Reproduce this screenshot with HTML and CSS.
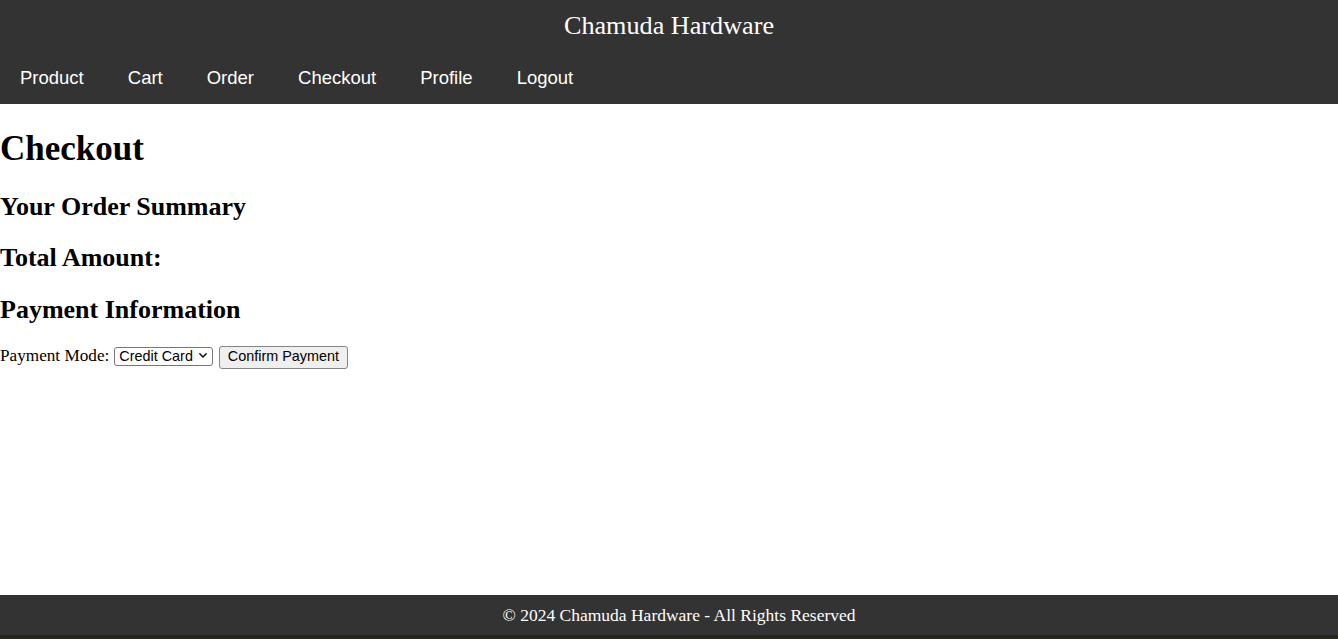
FILE: index.html
```html
<!DOCTYPE html>
<html lang="en">
<head>
<meta charset="utf-8">
<title>Checkout - Chamuda Hardware</title>
<link rel="stylesheet" href="styles.css">
</head>
<body>
<header class="site-header">
  <div class="site-title">Chamuda Hardware</div>
  <nav class="site-nav">
    <a href="#" class="nav-link">Product</a>
    <a href="#" class="nav-link">Cart</a>
    <a href="#" class="nav-link">Order</a>
    <a href="#" class="nav-link">Checkout</a>
    <a href="#" class="nav-link">Profile</a>
    <a href="#" class="nav-link">Logout</a>
  </nav>
</header>
<main class="content">
  <h1 class="page-title">Checkout</h1>
  <h2 class="section-title">Your Order Summary</h2>
  <h2 class="section-title">Total Amount:</h2>
  <h2 class="section-title">Payment Information</h2>
  <form class="pay-row">
    <label class="pay-label" for="mode">Payment Mode:</label>
    <span class="select-wrap">
      <select id="mode" class="pay-select">
        <option>Credit Card</option>
        <option>Debit Card</option>
        <option>Cash on Delivery</option>
      </select>
      <svg class="select-arrow" width="8" height="5" viewBox="0 0 8 5"><polyline points="0.8,0.8 4,4 7.2,0.8" fill="none" stroke="#111" stroke-width="1.5" stroke-linecap="round" stroke-linejoin="round"/></svg>
    </span>
    <button type="button" class="pay-button">Confirm Payment</button>
  </form>
</main>
<footer class="site-footer">© 2024 Chamuda Hardware - All Rights Reserved</footer>
</body>
</html>
```

FILE: styles.css
```css
html, body {
  margin: 0;
  padding: 0;
}

body {
  font-family: "Liberation Serif", "Times New Roman", serif;
  font-size: 16px;
  color: #000;
  background: #fff;
  min-height: 100vh;
  display: flex;
  flex-direction: column;
}

.site-header {
  background: #333333;
  color: #fff;
  padding-top: 10px;
}

.site-title {
  text-align: center;
  font-size: 26.2px;
  line-height: 31px;
}

.site-nav {
  display: flex;
  gap: 4px;
  margin-top: 12px;
}

.nav-link {
  font-family: "Liberation Sans", Arial, sans-serif;
  font-size: 18.5px;
  line-height: 21px;
  color: #fff;
  text-decoration: none;
  padding: 14px 20px 16px;
}

.content {
  flex: 1;
}

.page-title {
  font-size: 35px;
  line-height: 40px;
  font-weight: bold;
  margin: 25px 0 0;
}

.section-title {
  font-size: 26px;
  line-height: 29px;
  font-weight: bold;
  margin: 22.5px 0 0;
}

.pay-row {
  display: flex;
  align-items: baseline;
  margin: 22.4px 0 0;
}

.pay-label {
  font-size: 17.2px;
}

.select-wrap {
  position: relative;
  display: inline-flex;
  margin-left: 5px;
}

.pay-select {
  appearance: none;
  -webkit-appearance: none;
  box-sizing: border-box;
  width: 99px;
  height: 19.5px;
  font-family: "Liberation Sans", Arial, sans-serif;
  font-size: 14.4px;
  line-height: 17.5px;
  color: #000;
  background: #fff;
  border: 1px solid #767676;
  border-radius: 3px;
  padding: 0 18px 0 4px;
  margin: 0;
}

.select-arrow {
  position: absolute;
  left: 85px;
  top: 6px;
  pointer-events: none;
}

.pay-button {
  box-sizing: border-box;
  margin: 0 0 0 6px;
  font-family: "Liberation Sans", Arial, sans-serif;
  font-size: 14.4px;
  line-height: 17.3px;
  color: #000;
  background: #efefef;
  border: 1px solid #858585;
  border-radius: 3px;
  padding: 1px 7.5px 3px;
}

.site-footer {
  background: #333333;
  color: #fff;
  text-align: center;
  font-size: 17.5px;
  line-height: 20px;
  padding: 10px 0 10px 20px;
  border-bottom: 4px solid #22261b;
}
```
